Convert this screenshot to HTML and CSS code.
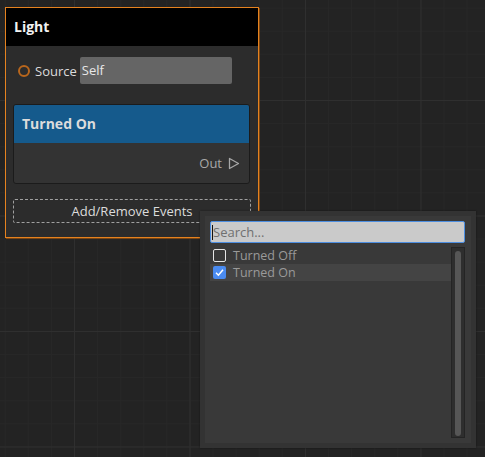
FILE: index.html
```html
<!DOCTYPE html>
<html>
<head>
<meta charset="utf-8">
<link rel="stylesheet" href="styles.css">
</head>
<body>
<div class="canvas">
  <div class="node">
    <div class="node-header">Light</div>
    <div class="node-body">
      <div class="source-row">
        <span class="port"></span>
        <span class="source-label">Source</span>
        <div class="source-field">Self</div>
      </div>
      <div class="event-card">
        <div class="event-title">Turned On</div>
        <div class="event-body">
          <span class="out-label">Out</span>
          <svg class="out-arrow" width="12" height="13" viewBox="0 0 12 13"><path d="M1.5 1.5 L10.5 6.5 L1.5 11.5 Z" fill="none" stroke="#a8a8a8" stroke-width="1.3" stroke-linejoin="round"/></svg>
        </div>
      </div>
      <div class="add-btn">Add/Remove Events</div>
    </div>
  </div>

  <div class="popup">
    <div class="popup-inner">
      <div class="search"><span class="caret"></span><span class="placeholder">Search...</span></div>
      <div class="list-area">
        <div class="list">
          <div class="item">
            <span class="check"></span>
            <span class="item-label">Turned Off</span>
          </div>
          <div class="item selected">
            <span class="check checked"><svg width="13" height="13" viewBox="0 0 13 13"><path d="M3 6.8 L5.4 9.2 L10 3.8" fill="none" stroke="#ffffff" stroke-width="1.5"/></svg></span>
            <span class="item-label">Turned On</span>
          </div>
        </div>
        <div class="scrollbar"><div class="thumb"></div></div>
      </div>
    </div>
  </div>
</div>
</body>
</html>
```

FILE: styles.css
```css
html, body {
  margin: 0;
  padding: 0;
}
body {
  font-family: "Open Sans", "Noto Sans", sans-serif;
  background: #232323;
}
.canvas {
  position: relative;
  width: 485px;
  height: 457px;
  overflow: hidden;
  background-color: #232323;
  background-image:
    linear-gradient(to right, #2f2f2f 1px, transparent 1px),
    linear-gradient(to bottom, #2f2f2f 1px, transparent 1px),
    linear-gradient(to right, #272727 1px, transparent 1px),
    linear-gradient(to bottom, #272727 1px, transparent 1px);
  background-size: 115.5px 115.5px, 115.5px 115.5px, 23.1px 23.1px, 23.1px 23.1px;
  background-position: 74px 100px, 74px 100px, 74px 100px, 74px 100px;
}

/* Node */
.node {
  position: absolute;
  left: 5px;
  top: 7px;
  width: 254px;
  height: 231px;
  box-sizing: border-box;
  border: 1px solid #e5821f;
  box-shadow: 1px 1px 0 #7a4512;
  background: #2c2c2c;
  display: flex;
  flex-direction: column;
}
.node-header {
  height: 38px;
  background: #000000;
  color: #f2f2f2;
  font-weight: 700;
  font-size: 14px;
  line-height: 38px;
  padding-left: 8px;
}
.node-body {
  flex: 1;
  display: flex;
  flex-direction: column;
  padding: 11px 6px 0 7px;
}
.source-row {
  display: flex;
  align-items: center;
  height: 27px;
}
.port {
  width: 8px;
  height: 8px;
  border: 2px solid #b8661c;
  border-radius: 50%;
  margin-left: 5px;
  margin-right: 5px;
}
.source-label {
  color: #dcdcdc;
  font-size: 13px;
  margin-right: 3px;
}
.source-field {
  width: 152px;
  height: 27px;
  box-sizing: border-box;
  background: #656565;
  border-radius: 2px;
  color: #e8e8e8;
  font-size: 13px;
  line-height: 27px;
  padding-left: 2px;
}

.event-card {
  margin-top: 20px;
  width: 237px;
  height: 80px;
  box-sizing: border-box;
  border: 1px solid #1b1b1b;
  border-radius: 3px;
  overflow: hidden;
  display: flex;
  flex-direction: column;
  background: #333333;
}
.event-title {
  height: 38px;
  background: #155a8c;
  color: #dcdcdc;
  font-weight: 700;
  font-size: 14px;
  line-height: 38px;
  padding-left: 8px;
}
.event-body {
  flex: 1;
  display: flex;
  align-items: center;
  justify-content: flex-end;
  padding-right: 9px;
  gap: 6px;
}
.out-label {
  color: #a8a8a8;
  font-size: 13px;
}
.out-arrow {
  display: block;
}

.add-btn {
  margin-top: 15px;
  width: 238px;
  height: 24px;
  box-sizing: border-box;
  border: 1px dashed #a0a0a0;
  border-radius: 2px;
  color: #dcdcdc;
  font-size: 13px;
  line-height: 22px;
  text-align: center;
}

/* Popup */
.popup {
  position: absolute;
  left: 200px;
  top: 211px;
  width: 276px;
  height: 237px;
  box-sizing: border-box;
  background: #333333;
  padding: 5px;
  display: flex;
  box-shadow: 0 0 2px rgba(0,0,0,0.4);
}
.popup-inner {
  flex: 1;
  background: #393939;
  display: flex;
  flex-direction: column;
  padding: 5px 6px 5px 5px;
}
.search {
  height: 22px;
  box-sizing: border-box;
  background: #cacaca;
  border: 1px solid #4d8ee0;
  border-radius: 2px;
  display: flex;
  align-items: center;
  padding-left: 1px;
}
.caret {
  width: 1px;
  height: 15px;
  background: #111111;
}
.placeholder {
  color: #707070;
  font-size: 13px;
}
.list-area {
  flex: 1;
  display: flex;
  margin-top: 4px;
}
.list {
  flex: 1;
  display: flex;
  flex-direction: column;
}
.item {
  height: 17px;
  display: flex;
  align-items: center;
  padding-left: 3px;
}
.item.selected {
  background: #444444;
}
.check {
  width: 13px;
  height: 13px;
  box-sizing: border-box;
  border: 1px solid #e6e6e6;
  border-radius: 2px;
  margin-right: 7px;
  display: flex;
}
.check.checked {
  background: #4a8bf0;
  border: none;
}
.item-label {
  color: #9a9a9a;
  font-size: 12.5px;
}
.scrollbar {
  width: 14px;
  box-sizing: border-box;
  background: #2e2e2e;
  border: 1px solid #242424;
  padding: 3px 3px 1px 3px;
  display: flex;
}
.thumb {
  flex: 1;
  background: #565656;
  border-radius: 3px;
}
```
